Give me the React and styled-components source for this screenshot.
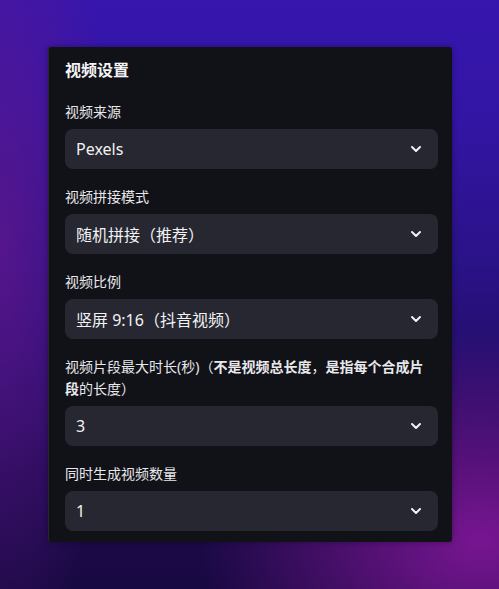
import React from 'react';
import styled, { createGlobalStyle } from 'styled-components';
import { ChevronDown } from 'lucide-react';

const GlobalStyle = createGlobalStyle`
  html, body {
    margin: 0;
    padding: 0;
    height: 100%;
  }
  body {
    font-family: "Noto Sans", "Noto Sans CJK SC", sans-serif;
    background: #1a0a3c;
  }
`;

const Backdrop = styled.div`
  width: 499px;
  height: 589px;
  box-sizing: border-box;
  padding: 47px 47px 0 48px;
  background:
    radial-gradient(ellipse 280px 210px at 480px 540px, rgba(125, 22, 150, 0.95), rgba(125, 22, 150, 0) 100%),
    radial-gradient(ellipse 120px 420px at 0px 250px, rgba(95, 22, 140, 0.8), rgba(95, 22, 140, 0) 100%),
    linear-gradient(180deg, #3616ae 0%, #3315a4 20%, #2a1287 45%, #1d0a4e 80%, #190942 100%);
`;

const Panel = styled.section`
  background: #111217;
  border-left: 1px solid #26272e;
  border-radius: 3px;
  padding: 11px 14px 11px 16px;
  box-shadow: 0 0 6px rgba(0, 0, 0, 0.35);
  display: flex;
  flex-direction: column;
  gap: 17px;
`;

const Title = styled.h2`
  margin: 0 0 2px;
  color: #f4f4f6;
  font-size: 16px;
  font-weight: 700;
  line-height: 24px;
`;

const Field = styled.div`
  display: flex;
  flex-direction: column;
  gap: 6px;
`;

const Label = styled.label`
  color: #e8e8ec;
  font-size: 14px;
  line-height: 22px;
  padding-right: 6px;

  b {
    font-weight: 700;
  }
`;

const Select = styled.div`
  height: 40px;
  border-radius: 8px;
  background: #262730;
  display: flex;
  align-items: center;
  justify-content: space-between;
  padding: 0 14px 0 11px;
  color: #f2f2f4;
  font-size: 16px;
`;

const fields = [
  { label: '视频来源', value: 'Pexels' },
  { label: '视频拼接模式', value: '随机拼接（推荐）' },
  { label: '视频比例', value: '竖屏 9:16（抖音视频）' },
  {
    label: (
      <>
        视频片段最大时长(秒)（<b>不是视频总长度</b>，<b>是指每个合成片段</b>的长度）
      </>
    ),
    value: '3',
  },
  { label: '同时生成视频数量', value: '1' },
];

export default function App() {
  return (
    <>
      <GlobalStyle />
      <Backdrop>
        <Panel>
          <Title>视频设置</Title>
          {fields.map((f, i) => (
            <Field key={i}>
              <Label>{f.label}</Label>
              <Select>
                <span>{f.value}</span>
                <ChevronDown size={16} strokeWidth={3} color="#f2f2f4" />
              </Select>
            </Field>
          ))}
        </Panel>
      </Backdrop>
    </>
  );
}
